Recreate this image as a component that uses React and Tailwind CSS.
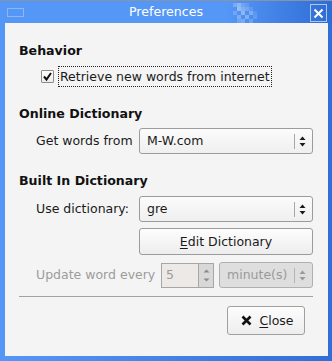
// Preferences dialog (GTK-ish look, blue window frame)

const FONT = "font-['DejaVu_Sans',sans-serif]"

function Arrows({ disabled = false }) {
  const c = disabled ? '#9a9a9a' : '#1a1a1a'
  return (
    <svg width="7" height="13" viewBox="0 0 7 13" aria-hidden>
      <path d="M0.5 5 L3.5 1.5 L6.5 5 Z" fill={c} />
      <path d="M0.5 8 L3.5 11.5 L6.5 8 Z" fill={c} />
    </svg>
  )
}

function Combo({ value, disabled = false, className = '' }) {
  return (
    <div
      className={`flex h-[26px] items-center rounded-[3px] border pl-[7px] pr-[6px] ${
        disabled
          ? 'border-[#b0b0b0] bg-[#dedede] text-[#9a9a9a]'
          : 'border-[#9c9c9c] bg-linear-to-b from-[#fbfbfb] to-[#efefef] text-[#1a1a1a]'
      } ${className}`}
    >
      <span className="flex-1">{value}</span>
      <span className={`mr-[4px] h-[15px] w-px ${disabled ? 'bg-[#b4b4b4]' : 'bg-[#a8a8a8]'}`} />
      <Arrows disabled={disabled} />
    </div>
  )
}

function Heading({ children, className = '' }) {
  return <div className={`text-[12.6px] leading-[16px] font-bold text-[#111] ${className}`}>{children}</div>
}

function TitleBar() {
  const squares = [
    [0, 0, 0.22], [4, 0, 0.35], [8, 0, 0.18], [12, 0, 0.12],
    [4, 4, 0.4], [8, 4, 0.28], [12, 4, 0.22], [16, 4, 0.12],
    [0, 8, 0.18], [8, 8, 0.35], [16, 8, 0.28], [20, 8, 0.1],
    [4, 12, 0.25], [12, 12, 0.3], [20, 12, 0.14],
    [4, 16, 0.18], [8, 16, 0.24], [16, 16, 0.18],
  ]
  return (
    <div className="relative flex h-[23px] shrink-0 items-center justify-center border-t border-[#8794a8] bg-linear-to-r from-[#5597f6] from-68% to-[#2e6cd5]">
      <div className="absolute left-[7px] top-[7px] h-[9px] w-[17px] border border-[#8db6f4]" />
      <svg className="absolute left-[233px] top-[2px]" width="26" height="20" aria-hidden>
        {squares.map(([x, y, o], i) => (
          <rect key={i} x={x} y={y} width="4" height="4" fill="#ffffff" opacity={o} />
        ))}
      </svg>
      <span className="text-[12.6px] leading-[16px] text-white">Preferences</span>
      <div className="absolute right-[5px] top-[3px] flex h-[18px] w-[17px] items-center justify-center border border-[#a9c6f2]">
        <svg width="11" height="11" viewBox="0 0 11 11" aria-hidden>
          <path d="M1.5 1.5 L9.5 9.5 M9.5 1.5 L1.5 9.5" stroke="#ffffff" strokeWidth="2" />
        </svg>
      </div>
    </div>
  )
}

export default function App() {
  return (
    <div className={`flex h-[361px] w-[332px] flex-col bg-linear-to-r from-[#5597f6] to-[#2f6fd7] ${FONT}`}>
      <TitleBar />
      <div className="mb-[5px] ml-[5px] mr-[4px] flex flex-1 flex-col bg-[#f4f4f4] pl-[14px] pr-[15px] pt-[20px] text-[12.5px] leading-[16px] text-[#1a1a1a]">
        <Heading>Behavior</Heading>
        <div className="mt-[7px] flex items-center pl-[22px]">
          <span className="flex h-[13px] w-[13px] items-center justify-center rounded-[1px] border border-[#8c8c8c] bg-linear-to-b from-white to-[#ececec]">
            <svg width="11" height="11" viewBox="0 0 11 11" aria-hidden>
              <path d="M2 5.5 L4.5 8.5 L9 2" fill="none" stroke="#111" strokeWidth="2" />
            </svg>
          </span>
          <span className="ml-[4px] flex h-[21px] items-center border border-dotted border-[#222] px-[1px]">
            Retrieve new words from internet
          </span>
        </div>

        <Heading className="mt-[19px]">Online Dictionary</Heading>
        <div className="mt-[6px] flex items-center pl-[17px]">
          <span className="w-[103px] shrink-0">Get words from</span>
          <Combo value="M-W.com" className="flex-1" />
        </div>

        <Heading className="mt-[19px]">Built In Dictionary</Heading>
        <div className="mt-[7px] flex items-center pl-[17px]">
          <span className="w-[103px] shrink-0">Use dictionary:</span>
          <Combo value="gre" className="flex-1" />
        </div>
        <div className="mt-[6px] flex pl-[120px]">
          <button
            type="button"
            className="flex h-[27px] flex-1 items-center justify-center rounded-[3px] border border-[#9c9c9c] bg-linear-to-b from-[#fdfdfd] to-[#ededed] text-[#1a1a1a]"
          >
            <span>
              <span className="underline decoration-1 underline-offset-2">E</span>dit Dictionary
            </span>
          </button>
        </div>
        <div className="mt-[7px] flex items-center pl-[17px] text-[#9c9c9c]">
          <span className="w-[125px] shrink-0">Update word every</span>
          <div className="flex h-[25px] w-[53px] shrink-0">
            <div className="flex w-[38px] items-center border border-[#a6a6a6] bg-[#ece9e6] pl-[4px]">5</div>
            <div className="flex w-[15px] flex-col items-center justify-between border border-l-0 border-[#a6a6a6] bg-[#d8d8d8] py-[5px]">
              <svg width="7" height="4" viewBox="0 0 7 4" aria-hidden>
                <path d="M0.5 3.5 L3.5 0.5 L6.5 3.5 Z" fill="#8a8a8a" />
              </svg>
              <svg width="7" height="4" viewBox="0 0 7 4" aria-hidden>
                <path d="M0.5 0.5 L3.5 3.5 L6.5 0.5 Z" fill="#8a8a8a" />
              </svg>
            </div>
          </div>
          <Combo value="minute(s)" disabled className="ml-[5px] h-[25px] flex-1" />
        </div>

        <div className="mt-[8px] h-px bg-[#a2a2a2]" />

        <div className="mt-[9px] flex justify-end pr-[8px]">
          <button
            type="button"
            className="flex h-[29px] w-[78px] items-center justify-center gap-[7px] rounded-[3px] border border-[#a0a0a0] bg-linear-to-b from-[#fdfdfd] to-[#ededed] pl-[3px] text-[#1a1a1a]"
          >
            <svg width="11" height="11" viewBox="0 0 11 11" aria-hidden>
              <path d="M1.5 1.5 L9.5 9.5 M9.5 1.5 L1.5 9.5" stroke="#111" strokeWidth="2.6" />
            </svg>
            <span>
              <span className="underline decoration-1 underline-offset-2">C</span>lose
            </span>
          </button>
        </div>
      </div>
    </div>
  )
}
